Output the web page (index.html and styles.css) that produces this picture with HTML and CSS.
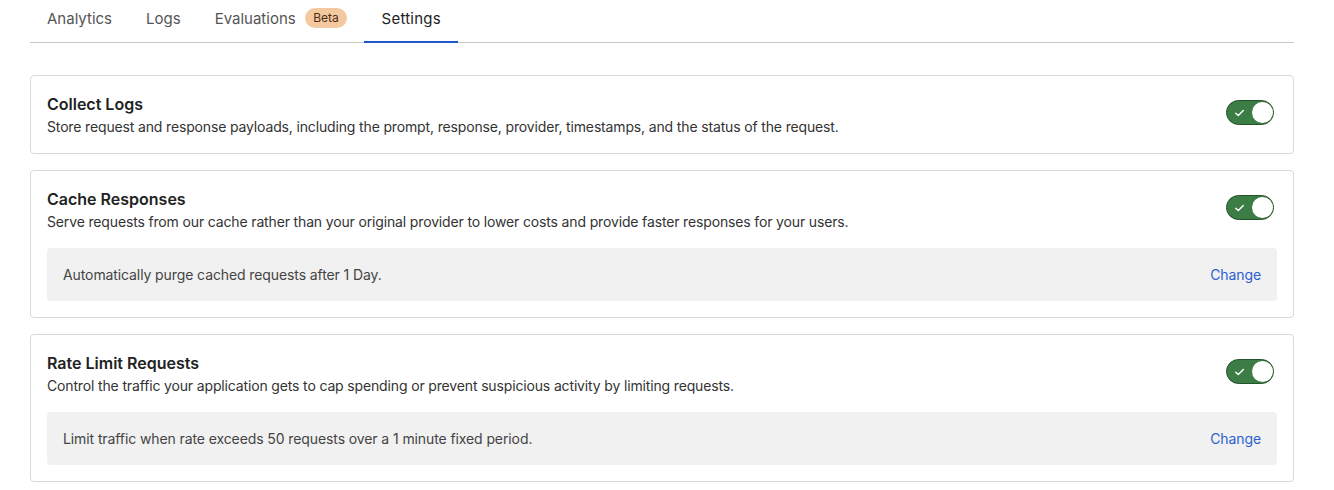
FILE: index.html
```html
<!DOCTYPE html>
<html>
<head>
<meta charset="utf-8">
<link rel="stylesheet" href="styles.css">
</head>
<body>
<div class="page">
  <nav class="tabs">
    <div class="tab">Analytics</div>
    <div class="tab">Logs</div>
    <div class="tab">Evaluations <span class="badge">Beta</span></div>
    <div class="tab active">Settings</div>
  </nav>

  <div class="cards">
    <section class="card">
      <div class="card-head">
        <div class="card-text">
          <h2 class="title">Collect Logs</h2>
          <p class="desc">Store request and response payloads, including the prompt, response, provider, timestamps, and the status of the request.</p>
        </div>
        <div class="toggle"><svg class="check" viewBox="0 0 10 8"><path d="M1.2 4.2 L3.8 6.6 L8.8 1.4" fill="none" stroke="#fff" stroke-width="1.4" stroke-linecap="round" stroke-linejoin="round"/></svg><span class="knob"></span></div>
      </div>
    </section>

    <section class="card">
      <div class="card-head">
        <div class="card-text">
          <h2 class="title">Cache Responses</h2>
          <p class="desc">Serve requests from our cache rather than your original provider to lower costs and provide faster responses for your users.</p>
        </div>
        <div class="toggle"><svg class="check" viewBox="0 0 10 8"><path d="M1.2 4.2 L3.8 6.6 L8.8 1.4" fill="none" stroke="#fff" stroke-width="1.4" stroke-linecap="round" stroke-linejoin="round"/></svg><span class="knob"></span></div>
      </div>
      <div class="setting-box">
        <span>Automatically purge cached requests after 1 Day.</span>
        <a class="change">Change</a>
      </div>
    </section>

    <section class="card">
      <div class="card-head">
        <div class="card-text">
          <h2 class="title">Rate Limit Requests</h2>
          <p class="desc">Control the traffic your application gets to cap spending or prevent suspicious activity by limiting requests.</p>
        </div>
        <div class="toggle"><svg class="check" viewBox="0 0 10 8"><path d="M1.2 4.2 L3.8 6.6 L8.8 1.4" fill="none" stroke="#fff" stroke-width="1.4" stroke-linecap="round" stroke-linejoin="round"/></svg><span class="knob"></span></div>
      </div>
      <div class="setting-box">
        <span>Limit traffic when rate exceeds 50 requests over a 1 minute fixed period.</span>
        <a class="change">Change</a>
      </div>
    </section>
  </div>
</div>
</body>
</html>
```

FILE: styles.css
```css
* { box-sizing: border-box; }
html, body { margin: 0; padding: 0; background: #fff; }
body {
  font-family: Inter, "Noto Sans", "Liberation Sans", sans-serif;
  color: #222;
}
.page {
  padding: 0 40px 0 30px;
}
.tabs {
  display: flex;
  border-bottom: 1px solid #c8c8c8;
  height: 43px;
}
.tab {
  display: flex;
  align-items: center;
  gap: 9px;
  padding: 0 17px 5px;
  font-size: 15px;
  color: #555;
  height: 43px;
  margin-bottom: -1px;
  border-bottom: 2px solid transparent;
}
.tab.active {
  color: #222;
  border-bottom-color: #2158c9;
  width: 94px;
  padding: 0 0 5px;
  justify-content: center;
  letter-spacing: 0.25px;
}
.badge {
  background: #f5c9a0;
  color: #4a2d14;
  font-size: 12px;
  border-radius: 10px;
  padding: 2px 8.5px;
  line-height: 16px;
}
.cards {
  margin-top: 32px;
  display: flex;
  flex-direction: column;
  gap: 16px;
}
.card {
  border: 1px solid #d9d9d9;
  border-radius: 4px;
  padding: 16px;
}
.card-head {
  display: flex;
  align-items: flex-start;
  justify-content: space-between;
}
.title {
  margin: 0;
  font-size: 16px;
  font-weight: 600;
  line-height: 24px;
  color: #222;
}
.desc {
  margin: 1px 0 0;
  font-size: 14px;
  letter-spacing: -0.15px;
  line-height: 20px;
  color: #333;
}
.toggle {
  position: relative;
  width: 48px;
  height: 25px;
  border-radius: 13px;
  background: #3b7d45;
  border: 1.5px solid #24532b;
  margin: 8px 3px 0 0;
}
.check {
  position: absolute;
  left: 7px;
  top: 8px;
  width: 11px;
  height: 8px;
}
.knob {
  position: absolute;
  right: 0.5px;
  top: 0.5px;
  width: 21px;
  height: 21px;
  border-radius: 50%;
  background: #fff;
}
.setting-box {
  margin-top: 16px;
  background: #f1f1f1;
  border-radius: 4px;
  padding: 16px;
  display: flex;
  justify-content: space-between;
  align-items: center;
  font-size: 14px;
  letter-spacing: -0.1px;
  line-height: 21px;
  color: #444;
}
.change {
  color: #2b5fd0;
  cursor: pointer;
}
```
